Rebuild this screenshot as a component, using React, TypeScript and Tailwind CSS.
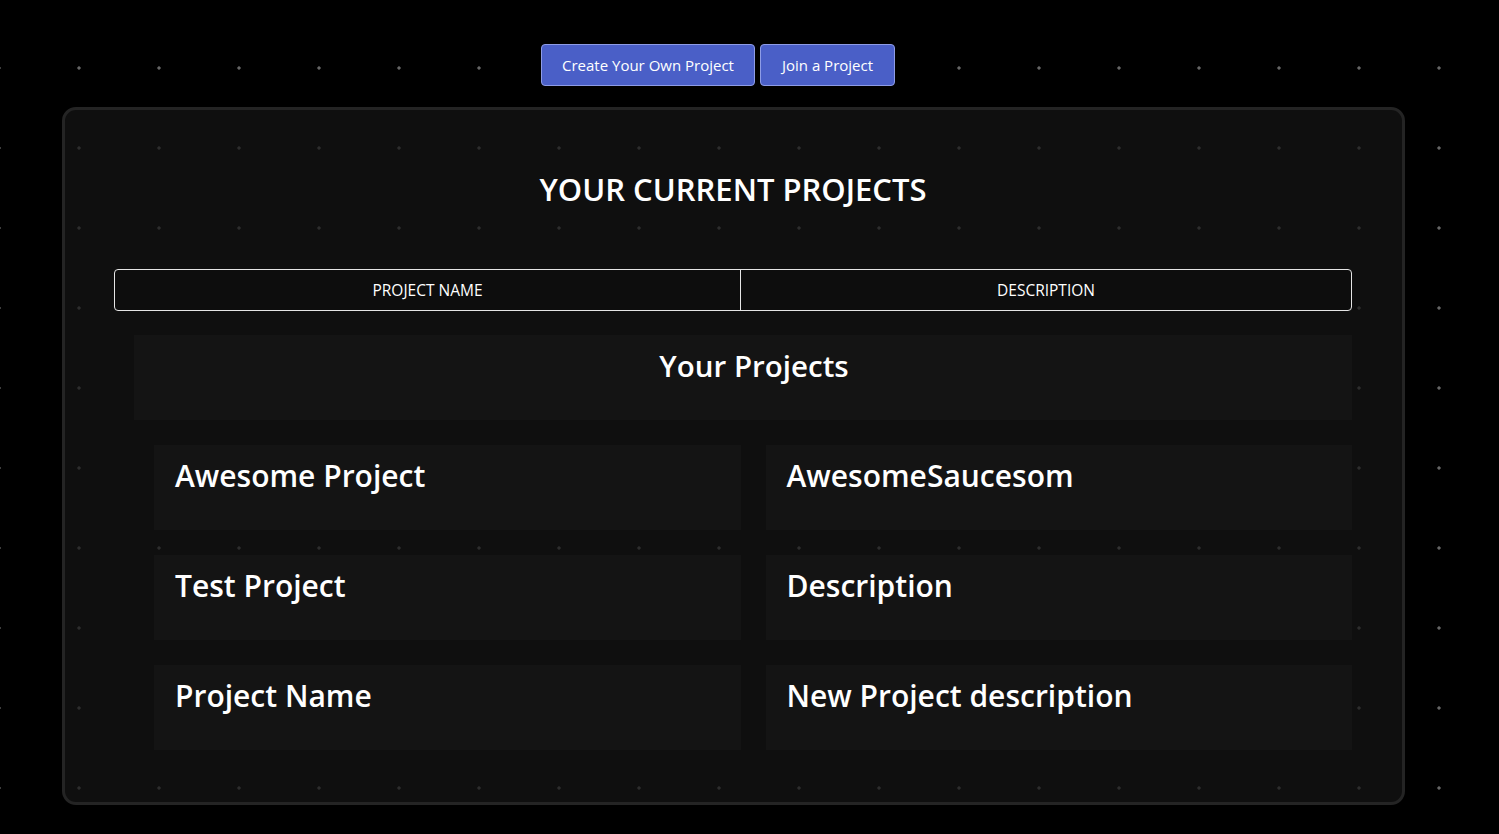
import React from 'react';

const projects = [
  { name: 'Awesome Project', description: 'AwesomeSaucesom' },
  { name: 'Test Project', description: 'Description' },
  { name: 'Project Name', description: 'New Project description' },
];

const ProjectCard: React.FC<{ text: string }> = ({ text }) => (
  <div className="h-[85px] bg-[#141414] px-[21px] pt-[10px] text-[30px] font-semibold leading-[42px] text-white">
    {text}
  </div>
);

export default function App() {
  return (
    <div
      className="min-h-[834px] bg-black bg-[radial-gradient(circle,#666666_1.3px,transparent_2px)] bg-[size:80px_80px] bg-[position:-41px_28px] pt-[44px] pb-[30px] text-white"
      style={{ fontFamily: '"Open Sans", "Noto Sans", sans-serif' }}
    >
      {/* Actions */}
      <div className="ml-[541px] flex gap-[5px]">
        <button className="h-[42px] rounded-[4px] border border-[#8e9ce6] bg-[#4a5fc7] px-[20px] text-[15px] text-white">
          Create Your Own Project
        </button>
        <button className="h-[42px] rounded-[4px] border border-[#8e9ce6] bg-[#4a5fc7] px-[21px] text-[15px] text-white">
          Join a Project
        </button>
      </div>

      {/* Projects panel */}
      <div className="ml-[62px] mt-[21px] w-[1343px] rounded-[14px] border-[3px] border-[#242424] bg-[#151515]/70 pl-[49px] pr-[50px] pt-[57px] pb-[52px]">
        <h1 className="text-center text-[31px] font-semibold leading-[44px]">YOUR CURRENT PROJECTS</h1>

        <div className="mt-[58px] grid h-[42px] grid-cols-[626px_1fr] rounded-[4px] border border-[#e5e5e5] bg-[#0d0d0d] text-[15.5px]">
          <div className="flex items-center justify-center border-r border-[#e5e5e5] pt-[1px]">PROJECT NAME</div>
          <div className="flex items-center justify-center pt-[1px]">DESCRIPTION</div>
        </div>

        <div className="ml-[20px] mt-[24px]">
          <div className="h-[85px] bg-[#141414] pl-[22px] pt-[11px] text-center text-[29.5px] font-semibold leading-[40px]">
            Your Projects
          </div>
          <div className="grid grid-cols-2 gap-x-[25px] gap-y-[25px] pl-[20px] pt-[25px]">
            {projects.map((p) => (
              <React.Fragment key={p.name}>
                <ProjectCard text={p.name} />
                <ProjectCard text={p.description} />
              </React.Fragment>
            ))}
          </div>
        </div>
      </div>
    </div>
  );
}
